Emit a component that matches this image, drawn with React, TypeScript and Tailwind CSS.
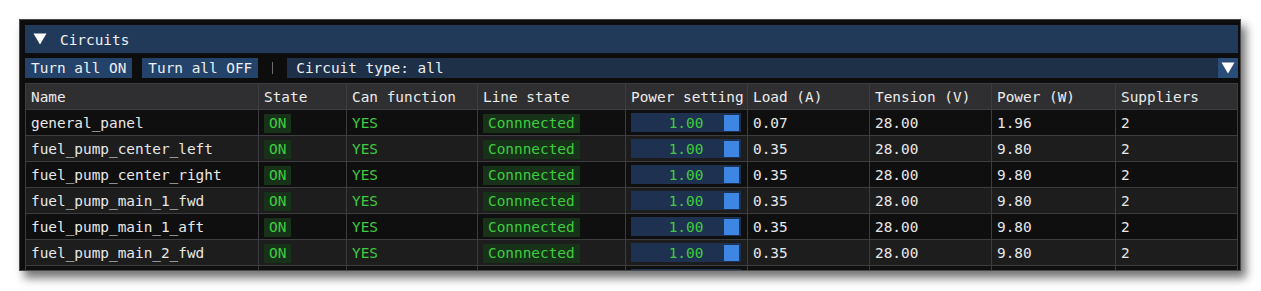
/*
  Circuits debug panel — ImGui-style collapsible section listing electrical
  circuits with their state, line state, power setting and readings.
*/

const columns = [
  { label: "Name", w: "w-[233px]" },
  { label: "State", w: "w-[88px]" },
  { label: "Can function", w: "w-[131px]" },
  { label: "Line state", w: "w-[148px]" },
  { label: "Power setting", w: "w-[122px]" },
  { label: "Load (A)", w: "w-[122px]" },
  { label: "Tension (V)", w: "w-[122px]" },
  { label: "Power (W)", w: "w-[124px]" },
  { label: "Suppliers", w: "w-[122px]" },
];

const circuits = [
  { name: "general_panel", load: "0.07", power: "1.96" },
  { name: "fuel_pump_center_left", load: "0.35", power: "9.80" },
  { name: "fuel_pump_center_right", load: "0.35", power: "9.80" },
  { name: "fuel_pump_main_1_fwd", load: "0.35", power: "9.80" },
  { name: "fuel_pump_main_1_aft", load: "0.35", power: "9.80" },
  { name: "fuel_pump_main_2_fwd", load: "0.35", power: "9.80" },
];

function DownTriangle() {
  return (
    <svg width="14" height="12" viewBox="0 0 14 12" className="block">
      <polygon points="0.5,0.5 13.5,0.5 7,11.5" fill="#ffffff" />
    </svg>
  );
}

/* Cell wrapper — every cell carries its own right/bottom grid line */
function Cell({ w, children }: { w: string; children?: React.ReactNode }) {
  return (
    <div className={`${w} shrink-0 h-[26px] flex items-center px-[5px] pt-[1px] border-r border-b border-[#3c3c41] overflow-hidden`}>
      {children}
    </div>
  );
}

function Badge({ text, w }: { text?: string; w?: string }) {
  return (
    <span className={`h-[19px] px-[5px] flex items-center bg-[#173219] text-[#3fcd3f] ${w ?? ""}`}>{text}</span>
  );
}

function Slider({ value }: { value?: string }) {
  /* value centred on the track, grab handle pinned right */
  return (
    <div className="relative w-[110px] h-[19px] -mt-[1px] bg-[#1f3150] flex items-center justify-center pt-[1px] text-[#3fcd3f]">
      {value}
      <span className="absolute right-[2px] top-[2px] w-[15px] h-[16px] bg-[#3d86e1]" />
    </div>
  );
}

export default function App() {
  return (
    <div className="w-[1261px] h-[291px] bg-white overflow-hidden pt-[19px] pl-[19px]">
      <div
        className="w-[1222px] h-[252px] bg-[#0d0d0d] border border-[#4a4a4a] pt-[5px] pl-[5px] pr-[2px] overflow-hidden shadow-[5px_7px_9px_rgba(0,0,0,0.55)] text-[#e8e8e8] text-[14.4px] leading-none"
        style={{ fontFamily: '"DejaVu Sans Mono", "Liberation Mono", monospace' }}
      >
        {/* ── Collapsing header ───────────────────────────── */}
        <div className="h-[28px] bg-[#213a59] flex items-center pl-[8px] gap-[13px]">
          <DownTriangle />
          <span className="pt-[2px] text-[#f2f2f2]">Circuits</span>
        </div>

        {/* ── Toolbar ─────────────────────────────────────── */}
        <div className="mt-[5px] h-[20px] flex items-center">
          <button className="h-[20px] px-[6px] pt-[1px] bg-[#23436b] text-[#f0f0f0]">Turn all ON</button>
          <button className="ml-[10px] h-[20px] px-[6px] pt-[1px] bg-[#23436b] text-[#f0f0f0]">Turn all OFF</button>
          <div className="ml-[14px] w-px h-[12px] bg-[#6e6e6e]" />
          <div className="ml-[14px] flex-1 h-[20px] bg-[#1e2f48] flex items-center justify-between">
            <span className="pl-[9px] pt-[1px] text-[#f0f0f0]">Circuit type: all</span>
            <div className="w-[20px] h-[20px] bg-[#2a4c78] flex items-center justify-center">
              <DownTriangle />
            </div>
          </div>
        </div>

        {/* ── Circuits table ──────────────────────────────── */}
        <div className="mt-[5px] w-[1213px] border-l border-t border-[#3c3c41]">
          <div className="flex bg-[#2f2f32] text-[#ececec]">
            {columns.map((c) => (
              <Cell key={c.label} w={c.w}>
                <span className="whitespace-nowrap">{c.label}</span>
              </Cell>
            ))}
          </div>

          {circuits.map((row, i) => (
            <div key={row.name} className={`flex ${i % 2 === 0 ? "bg-[#0f0f0f]" : "bg-[#1d1d1d]"}`}>
              <Cell w={columns[0].w}>{row.name}</Cell>
              <Cell w={columns[1].w}>
                <Badge text="ON" />
              </Cell>
              <Cell w={columns[2].w}>
                <span className="text-[#3fcd3f]">YES</span>
              </Cell>
              <Cell w={columns[3].w}>
                <Badge text="Connnected" />
              </Cell>
              <Cell w={columns[4].w}>
                <Slider value="1.00" />
              </Cell>
              <Cell w={columns[5].w}>{row.load}</Cell>
              <Cell w={columns[6].w}>28.00</Cell>
              <Cell w={columns[7].w}>{row.power}</Cell>
              <Cell w={columns[8].w}>2</Cell>
            </div>
          ))}

          {/* Next row, scrolled mostly out of view: only control tops show */}
          <div className="flex bg-[#0f0f0f]">
            <Cell w={columns[0].w} />
            <Cell w={columns[1].w}>
              <Badge w="w-[28px]" />
            </Cell>
            <Cell w={columns[2].w} />
            <Cell w={columns[3].w}>
              <Badge w="w-[97px]" />
            </Cell>
            <Cell w={columns[4].w}>
              <Slider />
            </Cell>
            <Cell w={columns[5].w} />
            <Cell w={columns[6].w} />
            <Cell w={columns[7].w} />
            <Cell w={columns[8].w} />
          </div>
        </div>
      </div>
    </div>
  );
}
